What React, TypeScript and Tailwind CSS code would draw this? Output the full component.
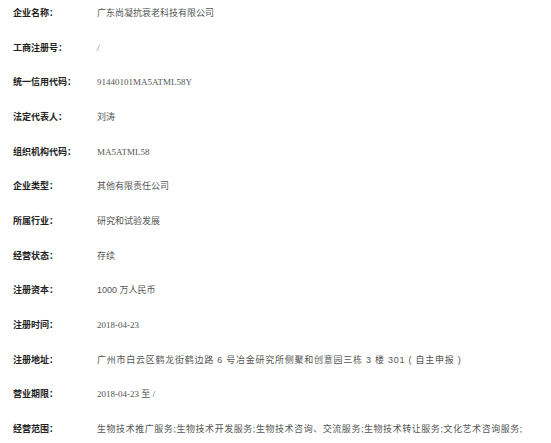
const serif = "font-['Liberation_Serif','Noto_Sans_CJK_SC',serif]"
const sans = "font-['Liberation_Sans','Noto_Sans_CJK_SC',sans-serif]"

const rows: { label: string; value: string; font?: string; extra?: string }[] = [
  { label: '企业名称：', value: '广东尚凝抗衰老科技有限公司' },
  { label: '工商注册号：', value: '/' },
  { label: '统一信用代码：', value: '91440101MA5ATML58Y' },
  { label: '法定代表人：', value: '刘涛' },
  { label: '组织机构代码：', value: 'MA5ATML58' },
  { label: '企业类型：', value: '其他有限责任公司' },
  { label: '所属行业：', value: '研究和试验发展' },
  { label: '经营状态：', value: '存续' },
  { label: '注册资本：', value: '1000 万人民币', font: sans },
  { label: '注册时间：', value: '2018-04-23' },
  { label: '注册地址：', value: '广州市白云区鹤龙街鹤边路 6 号冶金研究所侧聚和创意园三栋 3 楼 301 ( 自主申报 )', font: sans, extra: 'tracking-[0.75px]' },
  { label: '营业期限：', value: '2018-04-23 至 /' },
  {
    label: '经营范围：',
    value: '生物技术推广服务;生物技术开发服务;生物技术咨询、交流服务;生物技术转让服务;文化艺术咨询服务;',
    font: sans,
    extra: 'tracking-[0.55px]',
  },
]

export default function App() {
  return (
    <div className="w-[551px] h-[443px] overflow-hidden bg-white">
      <div className="flex flex-col">
        {rows.map((r) => (
          <div key={r.label} className="flex h-[34.67px] shrink-0">
            <div className="w-[97px] shrink-0 pl-[13px] leading-[26px] text-[9px] font-bold text-[#222] font-['Noto_Sans_CJK_SC',sans-serif] whitespace-nowrap">
              {r.label}
            </div>
            <div className={`w-[445px] leading-[26px] text-[9px] text-[#555] whitespace-nowrap ${r.font ?? serif} ${r.extra ?? ''}`}>
              {r.value}
            </div>
          </div>
        ))}
      </div>
    </div>
  )
}
